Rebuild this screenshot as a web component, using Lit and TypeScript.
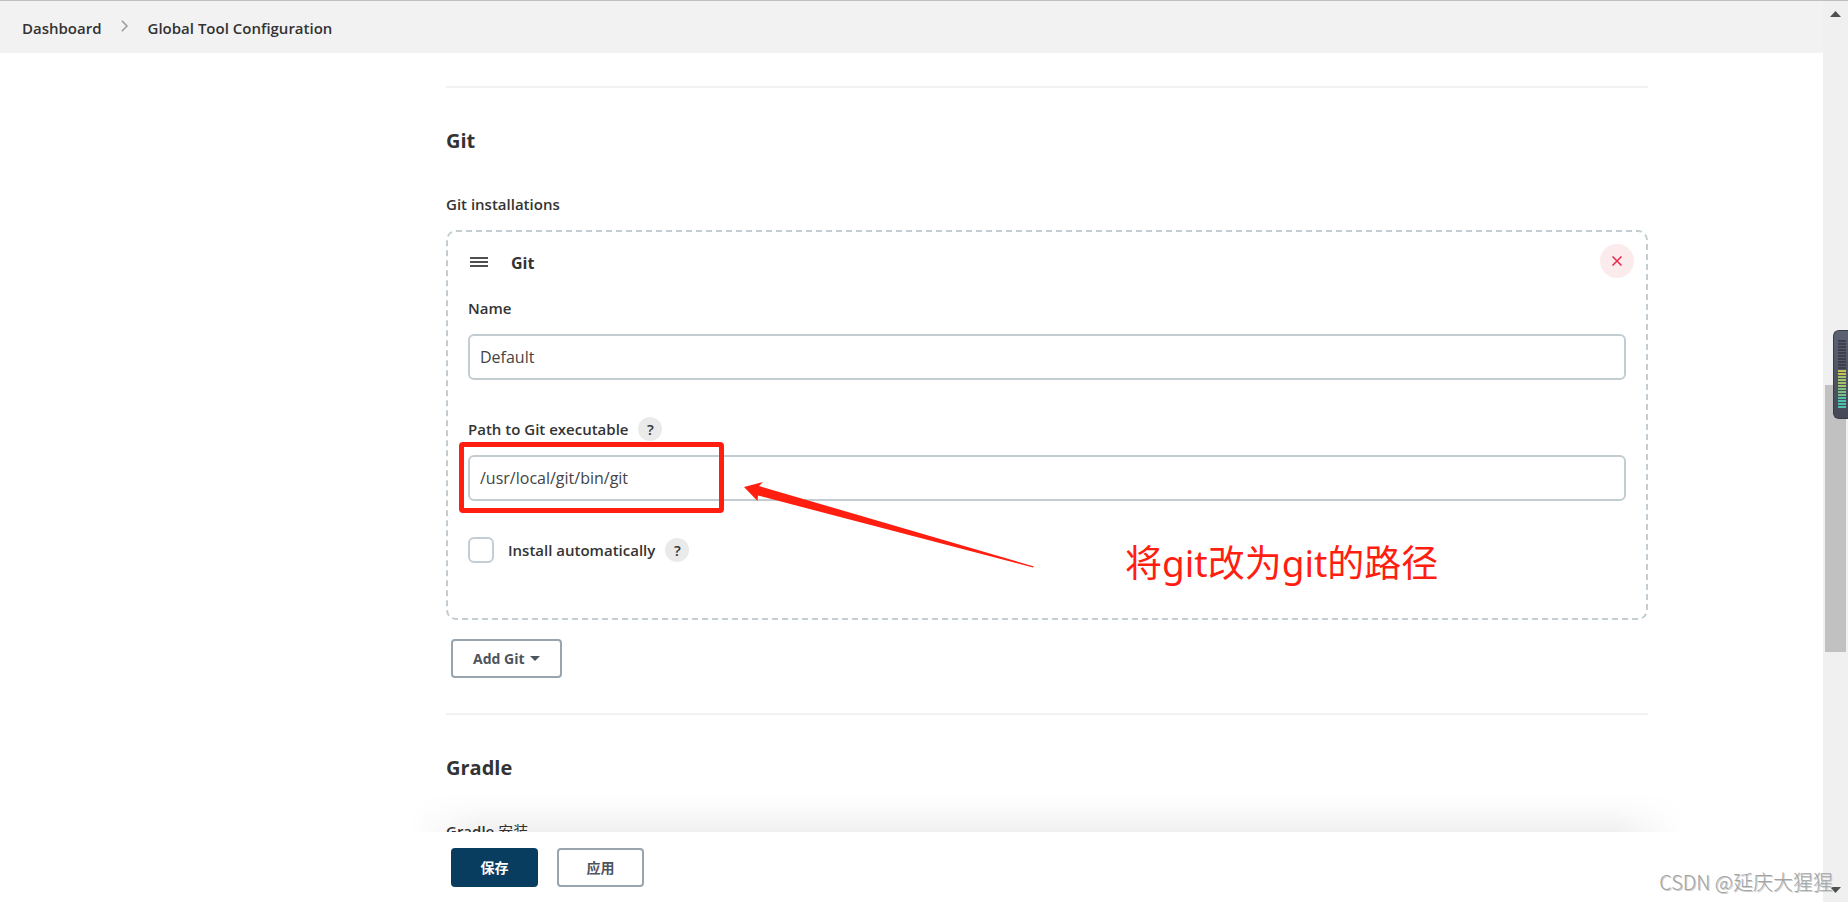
import { LitElement, html, css } from "lit";
import { customElement } from "lit/decorators.js";

@customElement("help-button")
class HelpButton extends LitElement {
  static styles = css`
    :host { display: inline-flex; }
    .help {
      width: 24px; height: 24px; padding: 0; border: 0; border-radius: 50%;
      background: #eaeaea; color: #333; font: 600 15px/24px "Open Sans", sans-serif;
    }
  `;
  render() {
    return html`<button class="help" type="button" aria-label="Help">?</button>`;
  }
}

@customElement("level-meter")
class LevelMeter extends LitElement {
  static styles = css`
    :host {
      display: flex; flex-direction: column; gap: 1px; box-sizing: border-box;
      width: 15px; height: 89px; padding: 9px 2px 9px 4px;
      border: 1px solid #383c48; border-right: 0; border-radius: 6px 0 0 6px;
      background: linear-gradient(#5c6272, #454957);
    }
    .bar { height: 2px; background: #3d404c; }
    .yellow { background: #c6c34f; }
    .lime { background: #a2c468; }
    .green { background: #79c183; }
    .teal { background: #4fc2ab; }
  `;
  render() {
    const tones = [
      ...Array(10).fill(""), ...Array(2).fill("yellow"), ...Array(4).fill("lime"),
      ...Array(3).fill("green"), ...Array(4).fill("teal"),
    ];
    return tones.map((t) => html`<span class="bar ${t}"></span>`);
  }
}

@customElement("app-root")
class AppRoot extends LitElement {
  static styles = css`
    * { box-sizing: border-box; }
    :host {
      display: grid; grid-template-columns: minmax(0, 1fr) 25px;
      height: 100vh; overflow: hidden; position: relative;
      border-top: 1px solid #bfbfbf; box-sizing: border-box;
      background: #fff; color: #333;
      font: 400 16px/24px "Open Sans", "Noto Sans CJK SC", sans-serif;
    }
    .page { display: flex; flex-direction: column; min-width: 0; min-height: 0; }
    .crumbs {
      display: flex; align-items: center; flex: none; height: 52px; padding: 2px 22px 0;
      background: #f2f2f2; font-size: 15px; font-weight: 600;
    }
    .crumbs a { color: inherit; text-decoration: none; }
    .crumbs svg { margin: 0 20px 4px 19px; }
    .content { flex: 1; min-height: 0; overflow: hidden; padding: 33px 175px 0 446px; }
    .rule { height: 2px; margin: 0; border: 0; background: #f2f2f2; }
    h2 { margin: 39px 0 37px; font-size: 20px; line-height: 28px; font-weight: 700; }
    .label { display: flex; align-items: center; gap: 10px; font-size: 15px; font-weight: 600; }
    .label span { font-weight: 400; margin-left: -6px; }
    .card {
      position: relative; margin: 14px 0 19px; height: 390px; padding: 12px 20px;
      border: 2px dashed #c3cdd1; border-radius: 10px;
    }
    .head { display: flex; align-items: center; height: 34px; margin-right: -8px; }
    .grip { margin: 2px 23px 0 2px; }
    .head h3 { flex: 1; margin: 4px 0 0; font-size: 16px; line-height: 24px; font-weight: 700; }
    .remove {
      display: grid; place-items: center; width: 34px; height: 34px; padding: 0;
      border: 0; border-radius: 50%; background: #fcebed;
    }
    .field { position: relative; }
    .name { margin: 18px 0 37px; }
    .text {
      display: block; width: 100%; height: 46px; margin-top: 14px; padding: 0 10px;
      border: 2px solid #c3cdd1; border-radius: 6px; background: #fff;
      color: #444; font: inherit; font-size: 16px; outline: none;
    }
    .check { display: flex; align-items: center; margin-top: 36px; }
    .check label { margin: 0 10px 0 14px; font-size: 15px; font-weight: 600; }
    .tick {
      appearance: none; width: 26px; height: 26px; margin: 0;
      border: 2px solid #c3cdd5; border-radius: 6px; background: #fff;
    }
    .btn {
      height: 39px; padding: 0 20px; border: 2px solid #98a5ae; border-radius: 4px;
      background: #fff; color: #4d545d;
      font: 700 14px/20px "Open Sans", "Noto Sans CJK SC", sans-serif;
    }
    .add { display: flex; align-items: center; gap: 5px; margin: 0 0 35px 5px; }
    .footer {
      position: relative; flex: none; display: flex; gap: 19px; height: 70px;
      padding: 16px 175px 0 451px; background: #fff;
    }
    .footer::before {
      content: ""; position: absolute; left: 410px; right: 139px; top: -40px; height: 40px;
      background: linear-gradient(to bottom, rgba(0,0,0,0), rgba(0,0,0,0.015) 40%, rgba(0,0,0,0.06));
      mask-image: linear-gradient(to right, transparent, #000 70px, #000 calc(100% - 70px), transparent);
    }
    .save, .apply { width: 87px; padding: 0; }
    .save { border-color: #083d60; background: #083d60; color: #fff; }
    .scroll { position: relative; background: #f0f0f0; }
    .up, .down { position: absolute; left: 7px; }
    .up { top: 10px; }
    .down { bottom: 9px; }
    .thumb { position: absolute; left: 2px; width: 21px; top: 384px; height: 267px; background: #c1c1c1; }
    level-meter { position: absolute; right: 0; top: 329px; }
    .frame {
      position: absolute; left: -9px; bottom: -12px; width: 265px; height: 71px;
      border: 5px solid #ff1e10; border-radius: 4px; pointer-events: none;
    }
    .arrow { position: absolute; left: 276px; bottom: -67px; overflow: visible; pointer-events: none; }
    .note {
      position: absolute; left: 657px; bottom: -88px; margin: 0; white-space: nowrap;
      color: #ff1e10; font: 400 37px/52px "Noto Sans", "Noto Sans CJK SC", sans-serif;
    }
    .mark {
      position: absolute; right: 15px; bottom: 6px; color: #a3a3a3; white-space: nowrap;
      font: 300 20px/28px "Noto Sans CJK SC", sans-serif; text-shadow: 1px 1px 0 #ccc;
    }
  `;

  render() {
    return html`
      <div class="page">
        <nav class="crumbs">
          <a href="#">Dashboard</a>
          <svg width="7" height="12" viewBox="0 0 7 12" fill="none" stroke="#999" stroke-width="1.5"><path d="M.8.8 6 6 .8 11.2" /></svg>
          <a href="#">Global Tool Configuration</a>
        </nav>
        <main class="content">
          <hr class="rule" />
          <h2>Git</h2>
          <div class="label">Git installations</div>
          <section class="card">
            <div class="head">
              <svg class="grip" width="18" height="10" fill="#505050"><path d="M0 0h18v2H0zM0 4h18v2H0zM0 8h18v2H0z" /></svg>
              <h3>Git</h3>
              <button class="remove" type="button" aria-label="Remove">
                <svg width="10" height="10" viewBox="0 0 10 10" stroke="#e6274a" stroke-width="1.5"><path d="m.5.5 9 9m0-9-9 9" /></svg>
              </button>
            </div>
            <div class="field name">
              <label class="label" for="name">Name</label>
              <input class="text" id="name" value="Default" />
            </div>
            <div class="field">
              <div class="label"><label for="path">Path to Git executable</label><help-button></help-button></div>
              <input class="text" id="path" value="/usr/local/git/bin/git" />
              <div class="frame"></div>
              <svg class="arrow" width="292" height="82" viewBox="0 0 292 82" fill="#ff1e10"><path d="M0 1 19-4 15 0 290 80.500 289 81.500 14 9.500 13.500 15z" /></svg>
              <p class="note">将git改为git的路径</p>
            </div>
            <div class="check">
              <input class="tick" id="auto" type="checkbox" />
              <label for="auto">Install automatically</label>
              <help-button></help-button>
            </div>
          </section>
          <button class="btn add" type="button">Add Git
            <svg width="10" height="5" fill="#4d545d"><path d="M0 0h10L5 5z" /></svg>
          </button>
          <hr class="rule" />
          <h2>Gradle</h2>
          <div class="label">Gradle <span>安装</span></div>
        </main>
        <footer class="footer">
          <button class="btn save" type="button">保存</button>
          <button class="btn apply" type="button">应用</button>
        </footer>
      </div>
      <aside class="scroll">
        <svg class="up" width="11" height="6" fill="#505050"><path d="M5.500 0 11 6H0z" /></svg>
        <div class="thumb"></div>
        <level-meter></level-meter>
        <svg class="down" width="11" height="6" fill="#505050"><path d="M0 0h11L5.500 6z" /></svg>
      </aside>
      <div class="mark">CSDN @延庆大猩猩</div>
    `;
  }
}
